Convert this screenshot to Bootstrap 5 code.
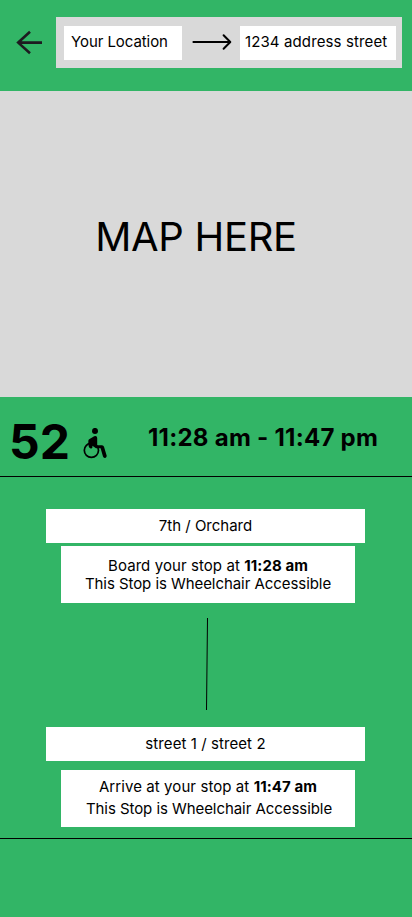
<!DOCTYPE html>
<html lang="en">
<head>
<meta charset="utf-8">
<meta name="viewport" content="width=device-width, initial-scale=1">
<title>Route 52</title>
<link href="https://cdn.jsdelivr.net/npm/bootstrap@5.3.0/dist/css/bootstrap.min.css" rel="stylesheet">
<style>
  body { background: #32b566; color: #000; font: 15px/18px Inter, sans-serif; min-height: 917px; }
  .route-bar { height: 91px; padding: 17px 10px 0 16px; }
  .back-btn { width: 27px; height: 51px; margin-right: 13px; }
  .route-fields { background: #d9d9d9; height: 51px; padding: 9px 6px 8px 8px; }
  .place { height: 34px; }
  .place-from { width: 117.6px; padding: 7px 0 0 7px; letter-spacing: -.07px; }
  .place-to { width: 156px; padding: 7px 0 0 5px; letter-spacing: .12px; }
  .map-area { background: #d9d9d9; height: 306px; font-size: 40px; line-height: 48px; letter-spacing: -.3px; padding: 122px 20px 0 0; }
  .trip-summary { height: 80px; border-bottom: 1px solid #000; padding-left: 9px; }
  .bus-number { font-size: 48px; line-height: 58px; margin-top: 16px; width: 74px; }
  .wheelchair { width: 24px; margin: 31px 0 0; }
  .trip-time { font-size: 24px; line-height: 29px; letter-spacing: .26px; margin: 26px 0 0 41px; }
  .trip-stops { height: 362px; padding: 32px 47px 0 46px; border-bottom: 1px solid #000; }
  .stop-name { height: 34px; padding-top: 8px; }
  .stop-name-end, .stop-action { letter-spacing: .08px; }
  .stop-access { letter-spacing: -.06px; }
  .stop-info { height: 57px; margin: 3px 10px 0 15px; padding-top: 11px; }
  .stop-info-end { margin-top: 9px; padding-top: 6px; line-height: 22px; }
  .stop-info-end .stop-access { padding-left: 2px; }
  .connector { height: 92px; margin: 15px 0 17px 158px; }
</style>
<script src="https://cdn.jsdelivr.net/npm/bootstrap@5.3.0/dist/js/bootstrap.bundle.min.js" defer></script>
</head>
<body>
<header class="route-bar d-flex">
  <a href="#" class="back-btn flex-shrink-0" aria-label="Back">
    <svg width="27" height="51" fill="none" stroke="#1d1b20" stroke-width="2.6"><path d="M26 25.6H2.5M14 14.8L2.2 25.6L14 36.2"/></svg>
  </a>
  <div class="route-fields d-flex flex-grow-1">
    <div class="place place-from bg-white text-nowrap">Your Location</div>
    <svg width="58.4" height="34" fill="none" stroke="#000" stroke-width="2" stroke-linecap="round" stroke-linejoin="round"><path d="M11.4 16H48M41.6 9.3L48.3 16L41.6 22.7"/></svg>
    <div class="place place-to bg-white text-nowrap">1234 address street</div>
  </div>
</header>
<main>
  <section class="map-area text-center">MAP HERE</section>
  <section class="trip-summary d-flex">
    <div class="bus-number fw-bold">52</div>
    <svg class="wheelchair" width="24" height="32" viewBox="0 0 24 32" fill="none" stroke="#000">
      <circle cx="12" cy="2.9" r="3" fill="#000" stroke="none"/>
      <path d="M5.3 12.8Q5.5 11.5 7 10.8L11.2 8.2Q14 7.3 14.2 10V17.2H19Q20.5 17.2 21 18.7L23.7 27.8Q23.9 29.4 22.3 29.9Q20.5 30.2 20 28.6L17.6 20.3H13L9.4 17.8V19.5Q9 20.7 7.6 20.4Q5.8 20 5.6 18Z" fill="#000" stroke="none"/>
      <circle cx="8.4" cy="22.3" r="7.1" stroke-width="1.7"/>
    </svg>
    <div class="trip-time fw-bold text-nowrap">11:28 am - 11:47 pm</div>
  </section>
  <section class="trip-stops text-center">
    <div class="stop-name bg-white">7th / Orchard</div>
    <div class="stop-info bg-white">
      <div class="stop-action">Board your stop at <b>11:28 am</b></div>
      <div class="stop-access">This Stop is Wheelchair Accessible</div>
    </div>
    <svg class="connector d-block" width="6" height="92" stroke="#000"><path d="M3.5 0L2.5 92"/></svg>
    <div class="stop-name stop-name-end bg-white">street 1 / street 2</div>
    <div class="stop-info stop-info-end bg-white">
      <div class="stop-action">Arrive at your stop at <b>11:47 am</b></div>
      <div class="stop-access">This Stop is Wheelchair Accessible</div>
    </div>
  </section>
</main>
</body>
</html>
